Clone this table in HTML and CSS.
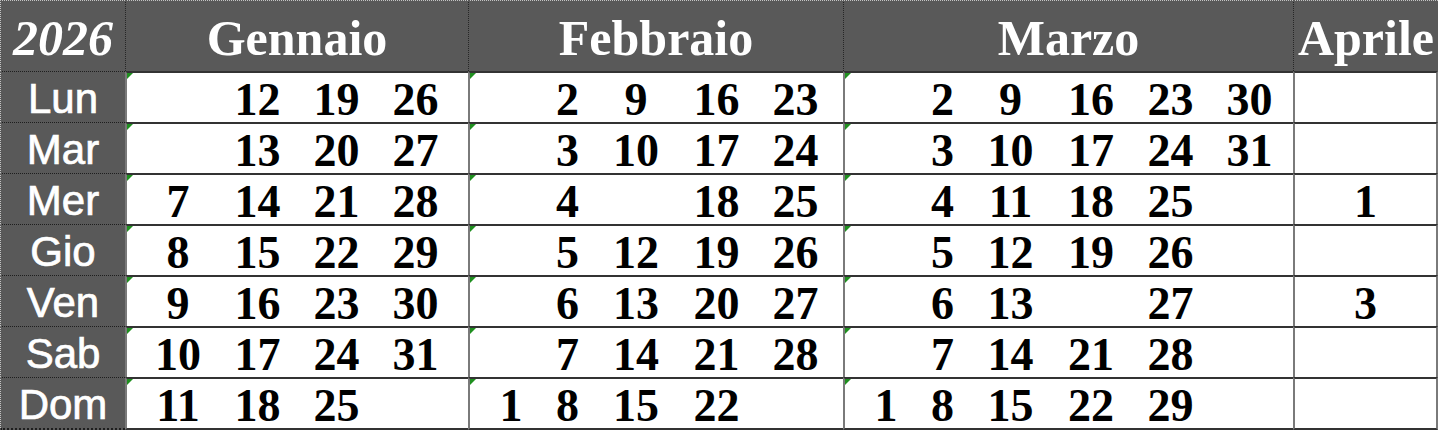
FILE: index.html
```html
<!DOCTYPE html>
<html lang="it">
<head>
<meta charset="utf-8">
<title>Calendario 2026</title>
<link rel="stylesheet" href="styles.css">
</head>
<body>
<div class="cal">
  <div class="hd year">2026</div>
  <div class="hd">Gennaio</div>
  <div class="hd">Febbraio</div>
  <div class="hd">Marzo</div>
  <div class="hd">Aprile</div>

  <div class="day">Lun</div>
  <div class="m gen"><span></span><span>12</span><span>19</span><span>26</span></div>
  <div class="m feb"><span></span><span>2</span><span>9</span><span>16</span><span>23</span></div>
  <div class="m mar"><span></span><span>2</span><span>9</span><span>16</span><span>23</span><span>30</span></div>
  <div class="m apr"></div>

  <div class="day">Mar</div>
  <div class="m gen"><span></span><span>13</span><span>20</span><span>27</span></div>
  <div class="m feb"><span></span><span>3</span><span>10</span><span>17</span><span>24</span></div>
  <div class="m mar"><span></span><span>3</span><span>10</span><span>17</span><span>24</span><span>31</span></div>
  <div class="m apr"></div>

  <div class="day">Mer</div>
  <div class="m gen"><span>7</span><span>14</span><span>21</span><span>28</span></div>
  <div class="m feb"><span></span><span>4</span><span></span><span>18</span><span>25</span></div>
  <div class="m mar"><span></span><span>4</span><span>11</span><span>18</span><span>25</span><span></span></div>
  <div class="m apr"><span>1</span></div>

  <div class="day">Gio</div>
  <div class="m gen"><span>8</span><span>15</span><span>22</span><span>29</span></div>
  <div class="m feb"><span></span><span>5</span><span>12</span><span>19</span><span>26</span></div>
  <div class="m mar"><span></span><span>5</span><span>12</span><span>19</span><span>26</span><span></span></div>
  <div class="m apr"></div>

  <div class="day">Ven</div>
  <div class="m gen"><span>9</span><span>16</span><span>23</span><span>30</span></div>
  <div class="m feb"><span></span><span>6</span><span>13</span><span>20</span><span>27</span></div>
  <div class="m mar"><span></span><span>6</span><span>13</span><span></span><span>27</span><span></span></div>
  <div class="m apr"><span>3</span></div>

  <div class="day">Sab</div>
  <div class="m gen"><span>10</span><span>17</span><span>24</span><span>31</span></div>
  <div class="m feb"><span></span><span>7</span><span>14</span><span>21</span><span>28</span></div>
  <div class="m mar"><span></span><span>7</span><span>14</span><span>21</span><span>28</span><span></span></div>
  <div class="m apr"></div>

  <div class="day last">Dom</div>
  <div class="m gen last"><span>11</span><span>18</span><span>25</span><span></span></div>
  <div class="m feb last"><span>1</span><span>8</span><span>15</span><span>22</span><span></span></div>
  <div class="m mar last"><span>1</span><span>8</span><span>15</span><span>22</span><span>29</span><span></span></div>
  <div class="m apr last"></div>
</div>
</body>
</html>
```
FILE: styles.css
```css
html, body {
  margin: 0;
  padding: 0;
  background: #ffffff;
}

.cal {
  display: grid;
  grid-template-columns: 125px 343px 375px 450px 145px;
  grid-template-rows: 71px repeat(6, 51px) 53px;
  width: 1438px;
}

.hd {
  box-sizing: border-box;
  background: #595959;
  color: #ffffff;
  font-family: "Liberation Serif", "Times New Roman", serif;
  font-weight: bold;
  font-size: 50px;
  line-height: normal;
  display: flex;
  align-items: center;
  justify-content: center;
  padding-top: 4px;
  border-top: 1px dotted #c4c4c4;
  border-left: 1px dotted #262626;
  white-space: nowrap;
}

.hd.year {
  font-style: italic;
  border-left: 1px dotted #c4c4c4;
}

.day {
  box-sizing: border-box;
  background: #595959;
  color: #ffffff;
  font-family: "Liberation Sans", Arial, sans-serif;
  font-size: 42px;
  line-height: normal;
  -webkit-text-stroke: 0.7px #ffffff;
  display: flex;
  align-items: center;
  justify-content: center;
  padding-top: 3px;
  border-top: 1px dotted #1e1e1e;
  border-left: 1px dotted #c4c4c4;
}

.day.last {
  border-bottom: 2px dotted #1e1e1e;
}

.m {
  box-sizing: border-box;
  position: relative;
  display: grid;
  align-items: center;
  justify-items: center;
  border-top: 2px solid #333333;
  border-left: 2px solid #7a7a7a;
  font-family: "Liberation Serif", "Times New Roman", serif;
  font-weight: bold;
  font-size: 46px;
  line-height: normal;
  color: #000000;
}

.m.last {
  border-bottom: 2px solid #333333;
}

.m.gen,
.m.feb,
.m.mar {
  justify-content: start;
}

.m.gen::before,
.m.feb::before,
.m.mar::before {
  content: "";
  position: absolute;
  top: 0;
  left: 0;
  width: 0;
  height: 0;
  border-top: 6px solid #1f8f1f;
  border-right: 6px solid transparent;
}

.m.gen {
  padding-left: 11px;
  grid-template-columns: 80px 79px 79px 79px;
}

.m.feb {
  padding-left: 12px;
  grid-template-columns: 58px 55px 82px 79px 79px;
}

.m.mar {
  padding-left: 12px;
  grid-template-columns: 58px 55px 81px 80px 79px 79px;
}

.m.apr {
  border-right: 2px solid #7a7a7a;
  grid-template-columns: 1fr;
}
```
